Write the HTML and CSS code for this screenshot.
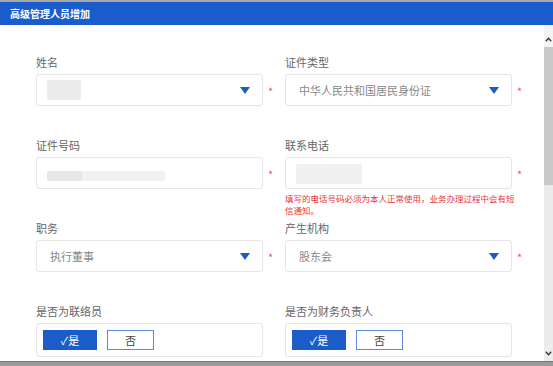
FILE: index.html
```html
<!DOCTYPE html>
<html lang="zh-CN">
<head>
<meta charset="utf-8">
<title>高级管理人员增加</title>
<link rel="stylesheet" href="styles.css">
</head>
<body>
<div class="dialog">
  <div class="dialog-title">高级管理人员增加</div>
  <div class="dialog-main">
    <div class="form">
      <div class="field">
        <div class="label">姓名</div>
        <div class="row">
          <div class="box select"><span class="blur blur-name"></span><span class="arrow"></span></div>
          <span class="req">*</span>
        </div>
      </div>
      <div class="field">
        <div class="label">证件类型</div>
        <div class="row">
          <div class="box select"><span class="val">中华人民共和国居民身份证</span><span class="arrow"></span></div>
          <span class="req">*</span>
        </div>
      </div>

      <div class="field">
        <div class="label">证件号码</div>
        <div class="row">
          <div class="box"><span class="blur blur-id"></span></div>
          <span class="req">*</span>
        </div>
      </div>
      <div class="field">
        <div class="label">联系电话</div>
        <div class="row">
          <div class="box"><span class="blur blur-tel"></span></div>
          <span class="req">*</span>
        </div>
        <div class="hint">填写的电话号码必须为本人正常使用，业务办理过程中会有短信通知。</div>
      </div>

      <div class="field">
        <div class="label">职务</div>
        <div class="row">
          <div class="box select"><span class="val">执行董事</span><span class="arrow"></span></div>
          <span class="req">*</span>
        </div>
      </div>
      <div class="field">
        <div class="label">产生机构</div>
        <div class="row">
          <div class="box select"><span class="val">股东会</span><span class="arrow"></span></div>
          <span class="req">*</span>
        </div>
      </div>

      <div class="field">
        <div class="label">是否为联络员</div>
        <div class="row">
          <div class="box radios">
            <span class="opt on">✓是</span>
            <span class="opt">否</span>
          </div>
        </div>
      </div>
      <div class="field">
        <div class="label">是否为财务负责人</div>
        <div class="row">
          <div class="box radios">
            <span class="opt on">✓是</span>
            <span class="opt">否</span>
          </div>
        </div>
      </div>
    </div>
    <div class="scrollbar">
      <div class="sb-btn up"><svg width="7" height="5" viewBox="0 0 7 5"><path d="M0.8 4.2 L3.5 1.2 L6.2 4.2" fill="none" stroke="#333" stroke-width="1.3"/></svg></div>
      <div class="sb-thumb"></div>
      <div class="sb-track"></div>
      <div class="sb-btn down"><svg width="7" height="5" viewBox="0 0 7 5"><path d="M0.8 0.8 L3.5 3.8 L6.2 0.8" fill="none" stroke="#333" stroke-width="1.3"/></svg></div>
    </div>
  </div>
  <div class="dialog-foot"></div>
</div>
</body>
</html>
```
FILE: styles.css
```css
html, body {
  margin: 0;
  padding: 0;
  background: #fff;
}
body {
  font-family: "Noto Sans CJK SC", "Noto Sans", sans-serif;
  color: #555;
}
.dialog {
  width: 553px;
  height: 366px;
  display: flex;
  flex-direction: column;
  border-top: 2px solid #a8a8a8;
  box-sizing: border-box;
  overflow: hidden;
}
.dialog-title {
  height: 23px;
  line-height: 23px;
  background: #1b5ccc;
  color: #fff;
  font-size: 10px;
  font-weight: bold;
  padding-left: 10px;
}
.dialog-main {
  flex: 1;
  display: flex;
  min-height: 0;
}
.form {
  flex: 1;
  display: grid;
  grid-template-columns: 249px 249px;
  grid-auto-rows: 83px;
  align-content: start;
  padding: 31px 0 0 36px;
  overflow: hidden;
}
.field {
  display: flex;
  flex-direction: column;
}
.label {
  font-size: 11px;
  line-height: 12px;
  height: 12px;
  margin-bottom: 6px;
  color: #666;
}
.row {
  display: flex;
  align-items: center;
}
.box {
  width: 227px;
  height: 32px;
  box-sizing: border-box;
  border: 1px solid #e6e6e6;
  border-radius: 3px;
  box-shadow: 0 0 1px #eee;
  display: flex;
  align-items: center;
  padding: 0 12px 0 10px;
}
.val {
  font-size: 11px;
  color: #888;
  padding-left: 3px;
  flex: 1;
}
.arrow {
  margin-left: auto;
  width: 0;
  height: 0;
  border-left: 5px solid transparent;
  border-right: 5px solid transparent;
  border-top: 7px solid #1a5bc4;
  margin-top: 1px;
}
.select .val + .arrow {
  margin-left: 0;
}
.req {
  color: #f05a5a;
  font-size: 11px;
  line-height: 11px;
  margin-left: 5px;
  margin-top: 2px;
}
.blur {
  display: block;
  background: #ececec;
  border-radius: 2px;
}
.blur-name {
  width: 34px;
  height: 20px;
}
.blur-id {
  width: 118px;
  height: 10px;
  margin-top: 6px;
  background: linear-gradient(90deg, #e6e6e6 0 30%, #f1f1f1 30% 100%);
}
.blur-tel {
  width: 66px;
  height: 20px;
  margin-top: 2px;
  background: #f0f0f0;
}
.hint {
  color: #e8343a;
  font-size: 8.5px;
  line-height: 12px;
  width: 232px;
  margin-top: 3px;
}
.radios {
  height: 34px;
  padding: 0 6px;
  gap: 10px;
}
.opt {
  width: 47px;
  height: 20px;
  box-sizing: border-box;
  border: 1px solid #5b8ad8;
  font-size: 11px;
  line-height: 18px;
  text-align: center;
  color: #444;
  background: #fff;
}
.opt.on {
  width: 54px;
  background: #1b5cc8;
  border-color: #1b5cc8;
  color: #fff;
}
.scrollbar {
  width: 9px;
  display: flex;
  flex-direction: column;
  background: #ececec;
}
.sb-btn {
  display: flex;
  justify-content: center;
  background: #f4f4f4;
}
.sb-btn.up {
  height: 22px;
  align-items: flex-end;
  padding-bottom: 5px;
  box-sizing: border-box;
}
.sb-btn.down {
  height: 16px;
  align-items: center;
  background: #ececec;
}
.sb-thumb {
  height: 138px;
  background: #c9c9c9;
}
.sb-track {
  flex: 1;
  background: #ebebeb;
}
.dialog-foot {
  height: 4px;
  background: #9a9a9a;
  border-top: 1px solid #777;
}
```
